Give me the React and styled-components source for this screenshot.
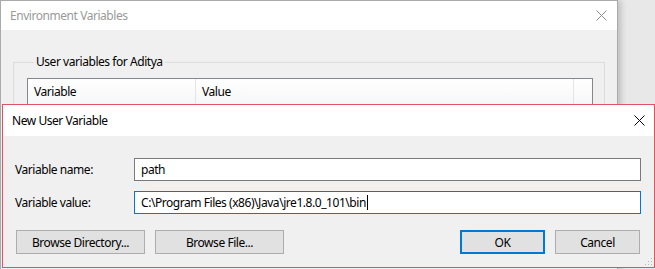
import styled, { createGlobalStyle } from 'styled-components';

const GlobalStyle = createGlobalStyle`
  html, body {
    margin: 0;
    padding: 0;
    background: #e8e8e8;
    font-family: "Noto Sans", "Liberation Sans", sans-serif;
    font-size: 12px;
    letter-spacing: -0.45px;
    color: #000;
    overflow: hidden;
  }
  * { box-sizing: border-box; }
`;

const Desktop = styled.div`
  position: relative;
  width: 655px;
  height: 269px;
  overflow: hidden;
`;

const Window = styled.div`
  position: absolute;
  left: ${p => p.$left}px;
  top: ${p => p.$top}px;
  width: ${p => p.$width}px;
  height: ${p => p.$height}px;
  display: flex;
  flex-direction: column;
  background: #f0f0f0;
  border: 1px solid ${p => p.$border};
  box-shadow: ${p => p.$shadow || 'none'};
`;

const TitleBar = styled.div`
  height: ${p => p.$height}px;
  flex: none;
  display: flex;
  align-items: center;
  justify-content: space-between;
  background: #fff;
  padding: 0 ${p => p.$padRight}px 0 ${p => p.$padLeft}px;
  color: ${p => (p.$inactive ? '#9a9a9a' : '#000')};
`;

const CloseGlyph = ({ color }) => (
  <svg width="11" height="11" viewBox="0 0 11 11">
    <path d="M0.5 0.5 L10.5 10.5 M10.5 0.5 L0.5 10.5" stroke={color} strokeWidth="1" fill="none" />
  </svg>
);

const EnvBody = styled.div`
  flex: 1;
  padding: 24px 12px 0 12px;
`;

const GroupBox = styled.fieldset`
  margin: 0;
  padding: 0 11px 0 13px;
  border: 1px solid #dcdcdc;
  height: 200px;
  min-width: 0;
`;

const GroupLegend = styled.legend`
  padding: 0 2px;
  margin-left: 7px;
  line-height: 16px;
`;

const ListView = styled.div`
  margin-top: 8px;
  height: 120px;
  border: 1px solid #828790;
  background: #fff;
`;

const HeaderRow = styled.div`
  display: grid;
  grid-template-columns: 168px 1fr 18px;
  height: 26px;
  background: linear-gradient(#fff, #f6f7f8);
  border-bottom: 1px solid #e5e5e5;
`;

const HeaderCell = styled.div`
  display: flex;
  align-items: center;
  padding-left: 6px;
  border-right: ${p => (p.$last ? 'none' : '1px solid #e5e5e5')};
`;

const DialogBody = styled.div`
  flex: 1;
  display: flex;
  flex-direction: column;
  padding: 22px 13px 0 12px;
  position: relative;
`;

const FieldRow = styled.div`
  display: flex;
  align-items: center;
  margin-bottom: 10px;
`;

const FieldLabel = styled.label`
  width: 119px;
  flex: none;
`;

const TextBox = styled.div`
  flex: 1;
  height: 23px;
  display: flex;
  align-items: center;
  padding-left: 6px;
  background: #fff;
  border: 1px solid ${p => (p.$focused ? '#0078d7' : '#7a7a7a')};
  white-space: nowrap;
`;

const Caret = styled.span`
  display: inline-block;
  width: 1px;
  height: 15px;
  background: #000;
  margin-left: 1px;
`;

const ButtonRow = styled.div`
  display: flex;
  gap: 10px;
  margin-top: 6px;
  padding: 0 1px 0 1px;
`;

const Spacer = styled.div`
  flex: 1;
`;

const Button = styled.button`
  width: ${p => p.$width}px;
  height: 24px;
  padding: 0;
  font: inherit;
  letter-spacing: inherit;
  color: #000;
  background: #e1e1e1;
  border: ${p => (p.$default ? '2px solid #0078d7' : '1px solid #adadad')};
`;

const SizeGrip = styled.div`
  position: absolute;
  right: 2px;
  bottom: 2px;
  width: 8px;
  height: 8px;
  background:
    radial-gradient(circle, #b8b8b8 0.8px, transparent 1px) 0 0 / 3px 3px;
  clip-path: polygon(100% 0, 100% 100%, 0 100%);
`;

export default function App() {
  return (
    <Desktop>
      <GlobalStyle />
      <Window
        $left={0}
        $top={0}
        $width={618}
        $height={300}
        $border="#aaaaaa"
        $shadow="3px 0 6px rgba(0,0,0,0.18)"
      >
        <TitleBar $height={29} $padLeft={9} $padRight={10} $inactive>
          <span>Environment Variables</span>
          <CloseGlyph color="#8a8a8a" />
        </TitleBar>
        <EnvBody>
          <GroupBox>
            <GroupLegend>User variables for Aditya</GroupLegend>
            <ListView>
              <HeaderRow>
                <HeaderCell>Variable</HeaderCell>
                <HeaderCell>Value</HeaderCell>
                <HeaderCell $last />
              </HeaderRow>
            </ListView>
          </GroupBox>
        </EnvBody>
      </Window>

      <Window $left={2} $top={104} $width={653} $height={164} $border="#e0525f">
        <TitleBar $height={31} $padLeft={9} $padRight={9}>
          <span>New User Variable</span>
          <CloseGlyph color="#000" />
        </TitleBar>
        <DialogBody>
          <FieldRow>
            <FieldLabel>Variable name:</FieldLabel>
            <TextBox>path</TextBox>
          </FieldRow>
          <FieldRow>
            <FieldLabel>Variable value:</FieldLabel>
            <TextBox $focused>
              C:\Program Files (x86)\Java\jre1.8.0_101\bin
              <Caret />
            </TextBox>
          </FieldRow>
          <ButtonRow>
            <Button $width={129}>Browse Directory...</Button>
            <Button $width={129}>Browse File...</Button>
            <Spacer />
            <Button $width={85} $default>OK</Button>
            <Button $width={85}>Cancel</Button>
          </ButtonRow>
          <SizeGrip />
        </DialogBody>
      </Window>
    </Desktop>
  );
}
